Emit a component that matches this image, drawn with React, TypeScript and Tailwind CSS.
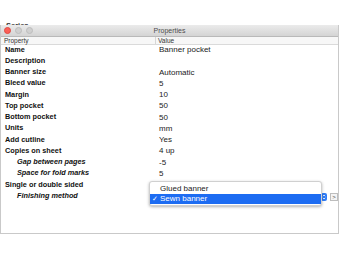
import React from "react";

const rows: { label: string; value: string; sub?: boolean }[] = [
  { label: "Name", value: "Banner pocket" },
  { label: "Description", value: "" },
  { label: "Banner size", value: "Automatic" },
  { label: "Bleed value", value: "5" },
  { label: "Margin", value: "10" },
  { label: "Top pocket", value: "50" },
  { label: "Bottom pocket", value: "50" },
  { label: "Units", value: "mm" },
  { label: "Add cutline", value: "Yes" },
  { label: "Copies on sheet", value: "4 up" },
  { label: "Gap between pages", value: "-5", sub: true },
  { label: "Space for fold marks", value: "5", sub: true },
  { label: "Single or double sided", value: "" },
  { label: "Finishing method", value: "", sub: true },
];

export default function App() {
  return (
    <div className="relative w-[340px] h-[260px] bg-white overflow-hidden font-['Liberation_Sans',Arial,sans-serif] text-[#111]">
      {/* window behind, only its last line peeks out */}
      <div className="h-[25px] overflow-hidden pl-[6px] pt-[21px] text-[7.5px] font-bold leading-[10px] text-[#333]">
        Series
      </div>

      {/* Properties window */}
      <div className="w-[339px] h-[209px] border-x border-b border-[#c9c9c9] flex flex-col">
        <div className="relative h-[12px] bg-gradient-to-b from-[#ebebeb] to-[#d4d4d4] border-b border-[#b9b9b9] flex items-center justify-center">
          <div className="absolute left-[3px] top-[2px] flex gap-[4px]">
            <span className="w-[7px] h-[7px] rounded-full bg-[#fc5f57] border border-[#df4a42]" />
            <span className="w-[7px] h-[7px] rounded-full bg-[#d0d0d0] border border-[#bdbdbd]" />
            <span className="w-[7px] h-[7px] rounded-full bg-[#d0d0d0] border border-[#bdbdbd]" />
          </div>
          <span className="text-[7px] leading-none text-[#4d4d4d]">Properties</span>
        </div>
        <div className="h-[7.5px] flex border-b border-[#dadada] bg-[#f7f7f7] text-[6.5px] leading-[7px] text-[#333]">
          <div className="w-[155px] pl-[3px] border-r border-[#d6d6d6]">Property</div>
          <div className="pl-[2px]">Value</div>
        </div>
        <div className="flex flex-col">
          {rows.map((r) => (
            <div key={r.label} className="h-[11.25px] flex items-center text-[8px]">
              <div
                className={`w-[157px] text-[7.3px] font-bold ${r.sub ? "pl-[16px] italic" : "pl-[4px]"}`}
              >
                {r.label}
              </div>
              <div className="pl-[1px] text-[#222]">{r.value}</div>
            </div>
          ))}
        </div>
      </div>

      {/* select control behind the open menu */}
      <div className="absolute left-[321px] top-[193px] w-[6px] h-[8px] rounded-[2px] bg-[#2f7cf6] flex items-center justify-center">
        <svg width="4" height="6" viewBox="0 0 4 6" fill="none" stroke="white" strokeWidth="0.8">
          <path d="M0.8 2.2 L2 1 L3.2 2.2 M0.8 3.8 L2 5 L3.2 3.8" />
        </svg>
      </div>
      <div className="absolute left-[330px] top-[193px] w-[8px] h-[8px] border border-[#bdbdbd] bg-[#f4f4f4] text-[6px] leading-[6px] text-[#444] flex items-center justify-center">
        &gt;
      </div>

      {/* open popup menu */}
      <div className="absolute left-[149px] top-[181px] w-[173px] h-[25px] bg-white rounded-[3px] border border-[#d0d0d0] shadow-[0_1px_3px_rgba(0,0,0,0.3)] py-[2px] text-[8px]">
        <div className="h-[10px] flex items-center pl-[10px] text-[#222]">Glued banner</div>
        <div className="h-[10px] flex items-center bg-[#1d6cf2] text-white">
          <span className="w-[10px] pl-[2px] text-[7px]">✓</span>
          <span>Sewn banner</span>
        </div>
      </div>
    </div>
  );
}
